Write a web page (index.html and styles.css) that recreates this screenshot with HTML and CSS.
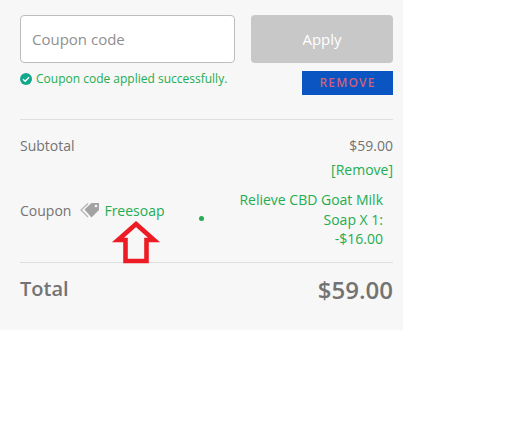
FILE: index.html
```html
<!DOCTYPE html>
<html lang="en">
<head>
<meta charset="utf-8">
<title>Coupon</title>
<link rel="stylesheet" href="styles.css">
</head>
<body>
<div class="panel">
  <div class="coupon-form">
    <div class="input">Coupon code</div>
    <div class="apply">Apply</div>
  </div>
  <div class="status">
    <div class="message">
      <svg class="check" viewBox="0 0 12 12" width="12" height="12"><circle cx="6" cy="6" r="6" fill="#12a88e"/><path d="M3 6.2 5.2 8.3 9 4.2" fill="none" stroke="#fff" stroke-width="1.4"/></svg>
      <span>Coupon code applied successfully.</span>
    </div>
    <div class="remove-btn">REMOVE</div>
  </div>
  <div class="summary">
    <div class="subtotal">
      <span>Subtotal</span>
      <span>$59.00</span>
    </div>
    <div class="remove-link">[Remove]</div>
    <div class="coupon-row">
      <span class="coupon-label">Coupon</span>
      <svg class="tag" viewBox="0 0 20 16" width="20" height="16"><path d="M4.5 7.5 11.5 1H19V8L11.5 15.5Z" fill="#a3a3a3"/><path d="M8 1.5 1 8 8 15" fill="none" stroke="#b5b5b5" stroke-width="1.3"/><circle cx="16" cy="4" r="1.3" fill="#f7f7f7"/></svg>
      <span class="coupon-code">Freesoap</span>
      <i class="dot"></i>
      <div class="discount">Relieve CBD Goat Milk<br>Soap X 1:<br>-$16.00</div>
      <svg class="arrow" viewBox="0 0 56 50" width="56" height="50"><path d="M28 7 46 23H38.5V44H17.5V23H10Z" fill="#f7f7f7" stroke="#ed1c24" stroke-width="4.6"/></svg>
    </div>
    <div class="total">
      <span class="total-label">Total</span>
      <span class="total-value">$59.00</span>
    </div>
  </div>
</div>
</body>
</html>
```
FILE: styles.css
```css
* { box-sizing: border-box; }
html, body { margin: 0; background: #fff; }
body { font-family: "Open Sans", sans-serif; color: #737373; }
.panel { width: 403px; height: 330px; background: #f7f7f7; padding: 15px 10px 0 20px; }
.coupon-form { display: flex; gap: 16px; height: 48px; }
.input { width: 215px; height: 48px; padding-left: 11px; background: #fff; border: 1px solid #bdbdbd; border-radius: 4px; font-size: 15px; line-height: 46px; color: #8f8f8f; }
.apply { width: 142px; height: 48px; background: #c8c8c8; border-radius: 4px; color: #fff; font-size: 15px; line-height: 48px; text-align: center; }
.status { display: flex; justify-content: space-between; align-items: flex-start; margin-top: 8px; }
.message { display: flex; align-items: center; gap: 4px; font-size: 12px; line-height: 16px; color: #22ad50; }
.check { flex: none; }
.remove-btn { width: 91px; height: 24px; background: #0a55c2; color: #d0607a; font-size: 12px; font-weight: 600; letter-spacing: 1.2px; line-height: 24px; text-align: center; }
.summary { margin-top: 24px; border-top: 1px solid #dfdfdf; }
.subtotal { display: flex; justify-content: space-between; font-size: 14px; line-height: 20px; margin-top: 16px; }
.remove-link { margin-top: 4px; font-size: 14px; line-height: 20px; text-align: right; color: #22ad50; }
.coupon-row { position: relative; display: flex; align-items: flex-start; height: 82px; padding-top: 10px; font-size: 14px; line-height: 19.6px; }
.coupon-label { margin-top: 11px; }
.tag { margin: 12px 0 0 9px; flex: none; }
.coupon-code { margin: 11px 0 0 4px; color: #22ad50; }
.dot { width: 5px; height: 5px; margin: 26px 0 0 34px; border-radius: 50%; background: #22ad50; flex: none; }
.discount { flex: 1; padding-right: 10px; text-align: right; color: #22ad50; }
.arrow { position: absolute; left: 88px; top: 37px; }
.total { display: flex; justify-content: space-between; align-items: center; height: 54px; border-top: 1px solid #dfdfdf; }
.total-label { font-size: 20px; font-weight: 600; margin-top: -2px; }
.total-value { font-size: 24px; font-weight: 600; }
```
